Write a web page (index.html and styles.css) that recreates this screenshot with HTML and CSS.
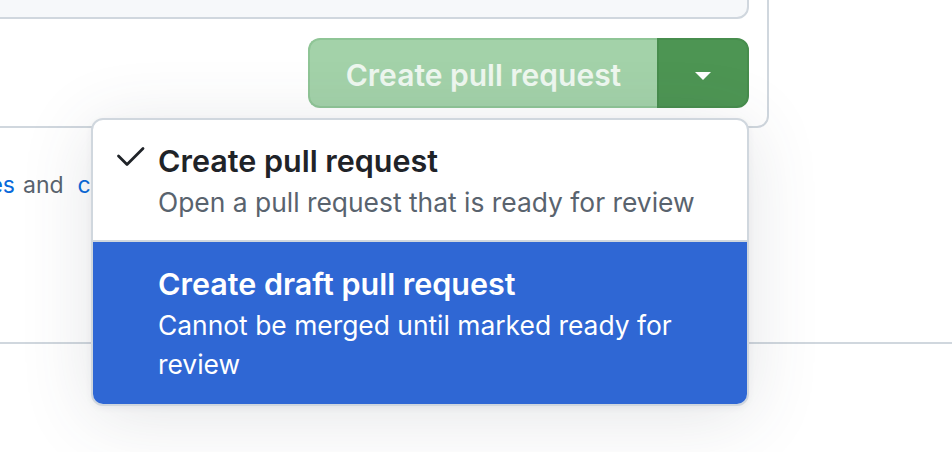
FILE: index.html
```html
<!DOCTYPE html>
<html lang="en">
<head>
<meta charset="utf-8">
<title>Create pull request</title>
<link rel="stylesheet" href="styles.css">
</head>
<body>
<div class="page">
  <div class="box">
    <div class="gray"></div>
    <div class="actions">
      <div class="btn-group">
        <button class="btn-main" type="button">Create pull request</button>
        <button class="btn-drop" type="button" aria-label="Select a type of pull request"><span class="caret"></span></button>
        <div class="menu" role="menu">
          <div class="item" role="menuitemradio" aria-checked="true">
            <svg class="check" viewBox="0 0 36 36" aria-hidden="true"><polyline points="4.5,18 13,26.5 29,10.5"/></svg>
            <div class="item-text">
              <div class="item-title">Create pull request</div>
              <div class="item-desc">Open a pull request that is ready for review</div>
            </div>
          </div>
          <div class="item selected" role="menuitemradio" aria-checked="false">
            <span class="check-space"></span>
            <div class="item-text">
              <div class="item-title">Create draft pull request</div>
              <div class="item-desc">Cannot be merged until marked ready for review</div>
            </div>
          </div>
        </div>
      </div>
    </div>
  </div>
  <p class="note"><span class="note-lead">contributing <a href="#">guidelines</a></span><span class="note-and">and</span><a href="#">code of conduct</a></p>
  <div class="footer"></div>
</div>
</body>
</html>
```
FILE: styles.css
```css
* { box-sizing: border-box; }
html, body { margin: 0; padding: 0; background: #ffffff; }
body {
  font-family: Inter, "Noto Sans", "Liberation Sans", sans-serif;
  color: #1f2328;
}
.page {
  position: relative;
  width: 952px;
  height: 452px;
  overflow: hidden;
}
.box {
  width: 809px;
  margin: -60px 0 0 -40px;
  border: 2px solid #d0d7de;
  border-radius: 12px;
  padding: 18px;
}
.gray {
  height: 59px;
  background: #f6f8fa;
  border: 2px solid #d0d7de;
  border-radius: 12px;
}
.actions {
  display: flex;
  justify-content: flex-end;
  margin-top: 19px;
}
.btn-group {
  position: relative;
  display: flex;
  height: 70px;
}
.btn-main, .btn-drop {
  font-family: inherit;
  margin: 0;
  cursor: pointer;
}
.btn-main {
  width: 349px;
  height: 70px;
  background: #a3d2a9;
  border: 2px solid #8fc596;
  border-right: none;
  border-radius: 12px 0 0 12px;
  color: #eef7ef;
  font-size: 30px;
  font-weight: 600;
  padding: 4px 0 0;
}
.btn-drop {
  width: 92px;
  height: 70px;
  background: #4d9553;
  border: 2px solid #478d4d;
  border-radius: 0 12px 12px 0;
  display: flex;
  align-items: center;
  justify-content: center;
  padding: 0;
}
.caret {
  width: 0;
  height: 0;
  border-left: 8.5px solid transparent;
  border-right: 8.5px solid transparent;
  border-top: 8px solid #ffffff;
  margin-top: 6px;
}
.menu {
  position: absolute;
  top: calc(100% + 10px);
  right: 0;
  width: 658px;
  background: #ffffff;
  border: 2px solid #d0d7de;
  border-radius: 12px;
  overflow: hidden;
  box-shadow: 0 10px 72px rgba(66, 74, 83, 0.14), 0 2px 6px rgba(66, 74, 83, 0.06);
  z-index: 2;
}
.item {
  display: flex;
  gap: 8px;
  padding: 21px 40px 18px 21px;
}
.check {
  width: 36px;
  height: 36px;
  margin-top: -3px;
  flex-shrink: 0;
  fill: none;
  stroke: #1f2328;
  stroke-width: 2.8;
  stroke-linecap: round;
  stroke-linejoin: round;
}
.check-space {
  width: 36px;
  flex-shrink: 0;
}
.item-title {
  font-size: 30.5px;
  font-weight: 600;
  line-height: 40px;
  color: #1f2328;
}
.item-desc {
  font-size: 26.4px;
  line-height: 39px;
  margin-top: 2px;
  color: #59636e;
}
.item.selected {
  background: #2f67d4;
  border-top: 2px solid #d0d7de;
  padding-top: 22px;
  padding-bottom: 20px;
}
.item.selected .item-title,
.item.selected .item-desc {
  color: #ffffff;
}
.note {
  display: flex;
  white-space: nowrap;
  margin: 39px 0 0;
  font-size: 23px;
  line-height: 36px;
  color: #59636e;
}
.note-lead {
  flex-shrink: 0;
  width: 300px;
  margin-left: -285px;
  text-align: right;
}
.note-and {
  margin: 0 14px 0 8px;
}
.note a {
  color: #0969da;
  text-decoration: none;
}
.footer {
  margin-top: 139px;
  border-top: 2px solid #d0d7de;
  height: 120px;
}
```
